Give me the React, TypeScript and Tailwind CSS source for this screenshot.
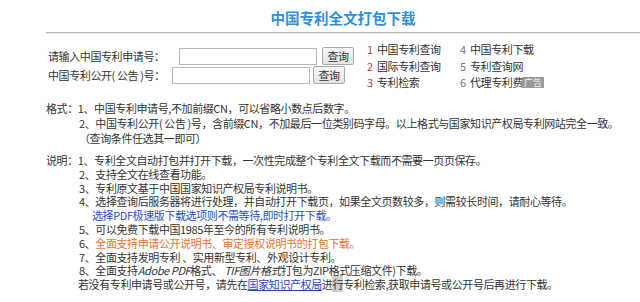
export default function App() {
  const links = [
    { n: "1", text: "中国专利查询", red: true },
    { n: "4", text: "中国专利下载", red: false },
    { n: "2", text: "国际专利查询", red: true },
    { n: "5", text: "专利查询网", red: false },
    { n: "3", text: "专利检索", red: true },
    { n: "6", text: "代理专利费用", red: false, ad: true },
  ];

  const font = { fontFamily: '"Noto Sans CJK SC", "Noto Sans", sans-serif' };

  return (
    <div className="w-[640px] h-[302px] bg-white overflow-hidden text-[#333] text-[11px] tracking-[-0.4px] whitespace-nowrap" style={font}>
      <div className="ml-[46px] w-[594px]">
        {/* title */}
        <div className="h-[32px] pt-[4px] flex items-center justify-center">
          <h1 className="text-[14.5px] font-bold text-[#2c8fe0] leading-none tracking-normal">中国专利全文打包下载</h1>
        </div>
        <div className="h-px bg-[#b8b8b8]" />
        <div className="h-px bg-[#e8e8e8]" />

        {/* search + links */}
        <div className="mt-[8px] h-[50px] flex">
          <div className="w-[321px] pl-[2px] pt-[5px]">
            <div className="h-[18px] flex items-center">
              <span className="w-[131px] shrink-0">请输入中国专利申请号：</span>
              <input className="w-[138px] h-[17px] border border-[#b9b9b9] bg-white outline-none" />
              <button className="ml-[5px] w-[32px] h-[18px] border border-[#a9a9a9] rounded-[2px] bg-gradient-to-b from-[#f8f8f8] to-[#e2e2e2] text-[11px] leading-none text-[#333]">
                查询
              </button>
            </div>
            <div className="mt-[1px] h-[18px] flex items-center">
              <span className="w-[124px] shrink-0">中国专利公开( 公告 )号：</span>
              <input className="w-[138px] h-[17px] border border-[#b9b9b9] bg-white outline-none" />
              <button className="ml-[3px] w-[32px] h-[18px] border border-[#a9a9a9] rounded-[2px] bg-gradient-to-b from-[#f8f8f8] to-[#e2e2e2] text-[11px] leading-none text-[#333]">
                查询
              </button>
            </div>
          </div>
          <div className="grid grid-cols-[93px_auto] leading-[15.5px]">
            {links.map((l) => (
              <div key={l.n} className="flex relative">
                <span className={`w-[10px] ${l.red ? "text-[#cc3b3b]" : "text-[#777]"}`}>{l.n}</span>
                <span>{l.text}</span>
                {l.ad && (
                  <span className="absolute left-[62px] top-[2px] h-[11px] px-[2px] bg-[#9a9a9a] text-[#f2f2f2] text-[9px] leading-[11px] tracking-normal">
                    广告
                  </span>
                )}
              </div>
            ))}
          </div>
        </div>

        {/* format */}
        <div className="mt-[8.5px] leading-[15px]">
          <div>格式：1、中国专利申请号,不加前缀CN，可以省略小数点后数字。</div>
          <div className="pl-[33px]">
            2、中国专利公开( 公告 )号，含前缀CN，不加最后一位类别码字母。以上格式与国家知识产权局专利网站完全一致。
          </div>
          <div className="pl-[33px]">（查询条件任选其一即可）</div>
        </div>

        {/* notes */}
        <div className="mt-[8.5px] leading-[13.8px]">
          <div>说明：1、专利全文自动打包并打开下载，一次性完成整个专利全文下载而不需要一页页保存。</div>
          <div className="pl-[33px]">2、支持全文在线查看功能。</div>
          <div className="pl-[33px]">3、专利原文基于中国国家知识产权局专利说明书。</div>
          <div className="pl-[33px]">4、选择查询后服务器将进行处理，并自动打开下载页，如果全文页数较多，则需较长时间，请耐心等待。</div>
          <div className="pl-[46px] text-[#2450d0]">选择PDF极速版下载选项则不需等待,即时打开下载。</div>
          <div className="pl-[33px]">5、可以免费下载中国1985年至今的所有专利说明书。</div>
          <div className="pl-[33px]">
            6、<span className="text-[#f07033]">全面支持申请公开说明书、审定授权说明书的打包下载。</span>
          </div>
          <div className="pl-[33px]">7、全面支持发明专利 、实用新型专利、外观设计专利。</div>
          <div className="pl-[33px]">
            8、全面支持<i>Adobe PDF</i>格式、 <i>TIF图片格式</i>打包为ZIP格式压缩文件)下载。
          </div>
          <div className="pl-[32px]">
            若没有专利申请号或公开号，请先在
            <a className="text-[#1f44d6] underline">国家知识产权局</a>进<span className="bg-[#cfcfcf]">行</span>
            专利检索,获取申请号或公开号后再进行下载。
          </div>
        </div>
      </div>
    </div>
  );
}
